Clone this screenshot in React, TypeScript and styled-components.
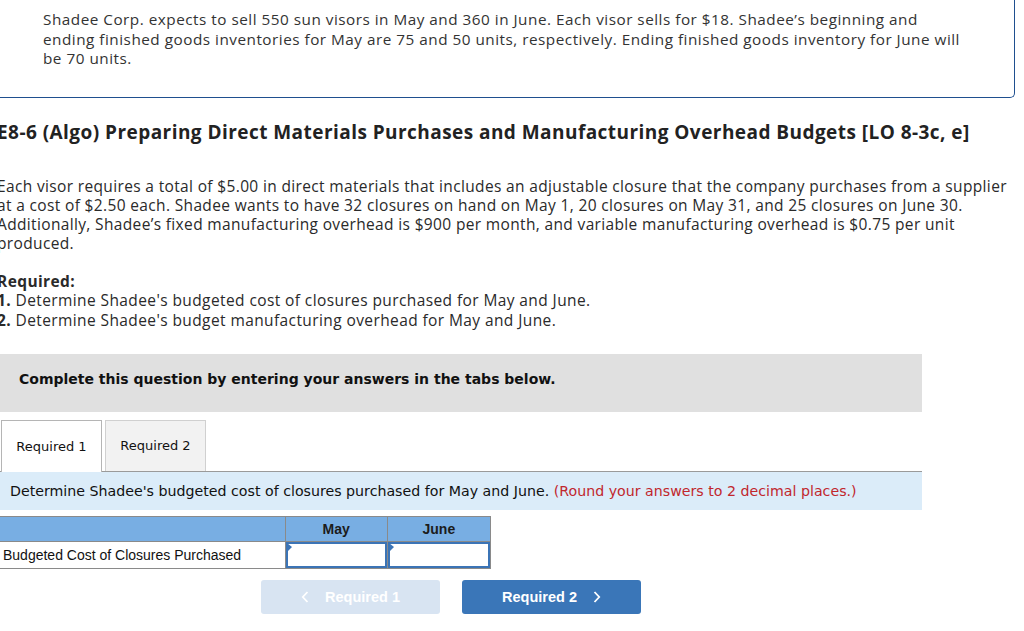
import React, { useState } from 'react'
import styled, { createGlobalStyle } from 'styled-components'

const GlobalStyle = createGlobalStyle`
  html, body {
    margin: 0;
    padding: 0;
    background: #fff;
    overflow: hidden;
  }
  body {
    font-family: "Open Sans", "Noto Sans", sans-serif;
    color: #222;
  }
`

const Page = styled.div`
  width: 1024px;
  height: 631px;
  overflow: hidden;
`

const IntroCard = styled.div`
  margin: -1px 9px 0 -20px;
  padding: 11px 40px 28px 62px;
  border: 1px solid #1f4f8f;
  border-top: none;
  border-radius: 0 0 5px 5px;
  font-size: 15.3px;
  line-height: 19.5px;
  letter-spacing: 0.5px;
  color: #333;
`

const Line = styled.div`
  white-space: nowrap;
`

const Heading = styled.h2`
  margin: 22px 0 0 -3px;
  font-size: 19px;
  line-height: 24px;
  font-weight: 700;
  color: #222;
  letter-spacing: 0.45px;
  white-space: nowrap;
`

const Paragraph = styled.div`
  margin: 33px 0 0 -3px;
  font-size: 15.5px;
  line-height: 19px;
  letter-spacing: 0.35px;
  color: #2a2a2a;
`

const Requirements = styled.div`
  margin: 19px 0 0 -3px;
  font-size: 15.5px;
  line-height: 19.8px;
  letter-spacing: 0.4px;
  color: #2a2a2a;
`

const Bold = styled.strong`
  font-weight: 700;
`

const Banner = styled.div`
  margin-top: 23px;
  width: 922px;
  height: 58px;
  box-sizing: border-box;
  padding: 16px 19px 0;
  background: #e0e0e0;
  font-family: "DejaVu Sans", Verdana, sans-serif;
  font-weight: 700;
  font-size: 14px;
  line-height: 18px;
  color: #111;
`

const TabRow = styled.div`
  display: flex;
  gap: 3px;
  margin-top: 8px;
  padding-left: 1px;
  height: 51px;
  align-items: flex-end;
`

const Tab = styled.button<{ $active?: boolean }>`
  width: 101px;
  box-sizing: border-box;
  border: 1px solid ${(p) => (p.$active ? '#b5b5b5' : '#d0d0d0')};
  border-bottom: none;
  background: ${(p) => (p.$active ? '#fff' : '#f2f2f2')};
  margin-bottom: ${(p) => (p.$active ? '-1px' : '0')};
  height: ${(p) => (p.$active ? '52px' : '51px')};
  position: relative;
  z-index: ${(p) => (p.$active ? 1 : 0)};
  font-family: "DejaVu Sans", Verdana, sans-serif;
  font-size: 13px;
  color: #111;
  padding: 0;
  cursor: pointer;
`

const Instruction = styled.div`
  width: 922px;
  height: 39px;
  box-sizing: border-box;
  border-top: 1px solid #9a9a9a;
  background: #dbecf9;
  padding: 10px 10px 0;
  font-family: "DejaVu Sans", Verdana, sans-serif;
  font-size: 14.2px;
  line-height: 18px;
  color: #111;
  white-space: nowrap;
`

const Hint = styled.span`
  color: #c1272d;
`

const Table = styled.table`
  margin-top: 6px;
  border-collapse: collapse;
  width: 491px;
  font-family: "Liberation Sans", Arial, sans-serif;
  font-size: 14px;
  color: #111;
`

const HeadCell = styled.th<{ $w: number; $first?: boolean }>`
  width: ${(p) => p.$w}px;
  height: 24px;
  padding: 0;
  background: #78aee3;
  border: 1px solid #8a8a8a;
  border-left: ${(p) => (p.$first ? 'none' : '1px solid #8a8a8a')};
  font-weight: 700;
  font-size: 14px;
  text-align: center;
  color: #1c1c1c;
`

const LabelCell = styled.td`
  height: 26px;
  padding: 0 0 0 3px;
  border: 1px solid #8a8a8a;
  border-left: none;
  font-size: 14px;
  white-space: nowrap;
`

const InputCell = styled.td`
  padding: 0;
  border: 1px solid #8a8a8a;
  position: relative;
`

const AnswerInput = styled.input`
  display: block;
  width: 100%;
  height: 26px;
  box-sizing: border-box;
  border: 2px solid #3b74b6;
  outline: none;
  font-family: "Liberation Sans", Arial, sans-serif;
  font-size: 14px;
  text-align: right;
  padding: 0 4px;
`

const Marker = styled.span`
  position: absolute;
  left: 1px;
  top: 1px;
  width: 0;
  height: 0;
  border-top: 4px solid transparent;
  border-bottom: 5px solid transparent;
  border-left: 5px solid #3b74b6;
`

const NavRow = styled.div`
  display: flex;
  gap: 22px;
  margin-top: 11px;
  padding-left: 261px;
`

const NavButton = styled.button<{ $disabled?: boolean }>`
  width: 179px;
  height: 34px;
  border: none;
  border-radius: 3px;
  background: ${(p) => (p.$disabled ? '#d8e4f2' : '#3a76b8')};
  color: #fff;
  font-family: "Liberation Sans", Arial, sans-serif;
  font-weight: 700;
  font-size: 14.5px;
  display: flex;
  align-items: center;
  justify-content: center;
  gap: 16px;
  cursor: ${(p) => (p.$disabled ? 'default' : 'pointer')};
  padding: 0;
`

const Chevron = ({ dir }: { dir: 'left' | 'right' }) => (
  <svg width="8" height="12" viewBox="0 0 8 12" fill="none">
    <path
      d={dir === 'left' ? 'M6.5 1 L1.8 6 L6.5 11' : 'M1.5 1 L6.2 6 L1.5 11'}
      stroke="#fff"
      strokeWidth="1.8"
    />
  </svg>
)

const App: React.FC = () => {
  const [tab, setTab] = useState(1)
  const [may, setMay] = useState('')
  const [june, setJune] = useState('')

  return (
    <Page>
      <GlobalStyle />
      <IntroCard>
        <Line>Shadee Corp. expects to sell 550 sun visors in May and 360 in June. Each visor sells for $18. Shadee’s beginning and</Line>
        <Line>ending finished goods inventories for May are 75 and 50 units, respectively. Ending finished goods inventory for June will</Line>
        <Line>be 70 units.</Line>
      </IntroCard>

      <Heading>E8-6 (Algo) Preparing Direct Materials Purchases and Manufacturing Overhead Budgets [LO 8-3c, e]</Heading>

      <Paragraph>
        <Line>Each visor requires a total of $5.00 in direct materials that includes an adjustable closure that the company purchases from a supplier</Line>
        <Line>at a cost of $2.50 each. Shadee wants to have 32 closures on hand on May 1, 20 closures on May 31, and 25 closures on June 30.</Line>
        <Line>Additionally, Shadee’s fixed manufacturing overhead is $900 per month, and variable manufacturing overhead is $0.75 per unit</Line>
        <Line>produced.</Line>
      </Paragraph>

      <Requirements>
        <Bold>Required:</Bold>
        <Line>
          <Bold>1.</Bold> Determine Shadee's budgeted cost of closures purchased for May and June.
        </Line>
        <Line>
          <Bold>2.</Bold> Determine Shadee's budget manufacturing overhead for May and June.
        </Line>
      </Requirements>

      <Banner>Complete this question by entering your answers in the tabs below.</Banner>

      <TabRow>
        <Tab $active={tab === 1} onClick={() => setTab(1)}>Required 1</Tab>
        <Tab $active={tab === 2} onClick={() => setTab(2)}>Required 2</Tab>
      </TabRow>

      <Instruction>
        Determine Shadee's budgeted cost of closures purchased for May and June.{' '}
        <Hint>(Round your answers to 2 decimal places.)</Hint>
      </Instruction>

      <Table>
        <thead>
          <tr>
            <HeadCell $w={285} $first />
            <HeadCell $w={102}>May</HeadCell>
            <HeadCell $w={103}>June</HeadCell>
          </tr>
        </thead>
        <tbody>
          <tr>
            <LabelCell>Budgeted Cost of Closures Purchased</LabelCell>
            <InputCell>
              <AnswerInput value={may} onChange={(e) => setMay(e.target.value)} />
              <Marker />
            </InputCell>
            <InputCell>
              <AnswerInput value={june} onChange={(e) => setJune(e.target.value)} />
              <Marker />
            </InputCell>
          </tr>
        </tbody>
      </Table>

      <NavRow>
        <NavButton $disabled>
          <Chevron dir="left" />
          Required 1
        </NavButton>
        <NavButton onClick={() => setTab(2)}>
          Required 2
          <Chevron dir="right" />
        </NavButton>
      </NavRow>
    </Page>
  )
}

export default App
